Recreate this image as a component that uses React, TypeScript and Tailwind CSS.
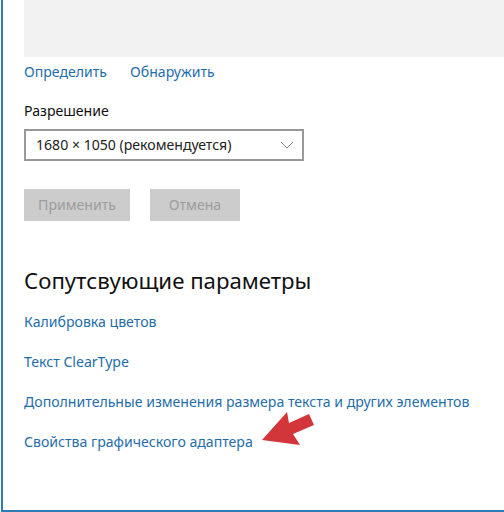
import React from "react";

const font = { fontFamily: '"Noto Sans", "Open Sans", sans-serif' };

function Link({ children }: { children: React.ReactNode }) {
  return (
    <a className="text-[14.1px] leading-[20px] text-[#1f6dab] cursor-pointer">{children}</a>
  );
}

export default function App() {
  return (
    <div className="w-[504px] h-[512px] bg-white overflow-hidden" style={font}>
      <div className="relative ml-px h-[512px] border-l-2 border-b-2 border-[#2c7db5] pl-[21px] flex flex-col">
        <div className="h-[57px] bg-[#f2f2f2]" />

        <div className="mt-[5px] flex gap-[23px]">
          <Link>Определить</Link>
          <Link>Обнаружить</Link>
        </div>

        <div className="mt-[19px] text-[14.1px] leading-[20px] text-[#111]">Разрешение</div>

        <div className="mt-[8px] w-[280px] h-[32px] border-2 border-[#999] flex items-center justify-between pl-[10px] pr-[8px] text-[14.1px] text-[#222]">
          <span>1680 × 1050 (рекомендуется)</span>
          <svg width="14" height="8" viewBox="0 0 14 8" fill="none" stroke="#8a8a8a" strokeWidth="1">
            <path d="M1 1l6 6 6-6" />
          </svg>
        </div>

        <div className="mt-[28px] flex gap-[20px]">
          <button className="h-[32px] w-[106px] bg-[#cccccc] text-[14.1px] text-[#9c9c9c]">Применить</button>
          <button className="h-[32px] w-[90px] bg-[#cccccc] text-[14.1px] text-[#9c9c9c]">Отмена</button>
        </div>

        <div className="mt-[45px] text-[22.2px] leading-[30px] text-[#111]">Сопутсвующие параметры</div>

        <div className="mt-[16px] flex flex-col gap-[20px]">
          <Link>Калибровка цветов</Link>
          <Link>Текст ClearType</Link>
          <Link>Дополнительные изменения размера текста и других элементов</Link>
          <Link>Свойства графического адаптера</Link>
        </div>

        <svg className="absolute left-[-3px] top-0" width="504" height="512" viewBox="0 0 504 512">
          <polygon
            points="262,440 287,412 289,423 309,414 314,425 293,434 300,445"
            fill="#d2363b"
          />
        </svg>
      </div>
    </div>
  );
}
